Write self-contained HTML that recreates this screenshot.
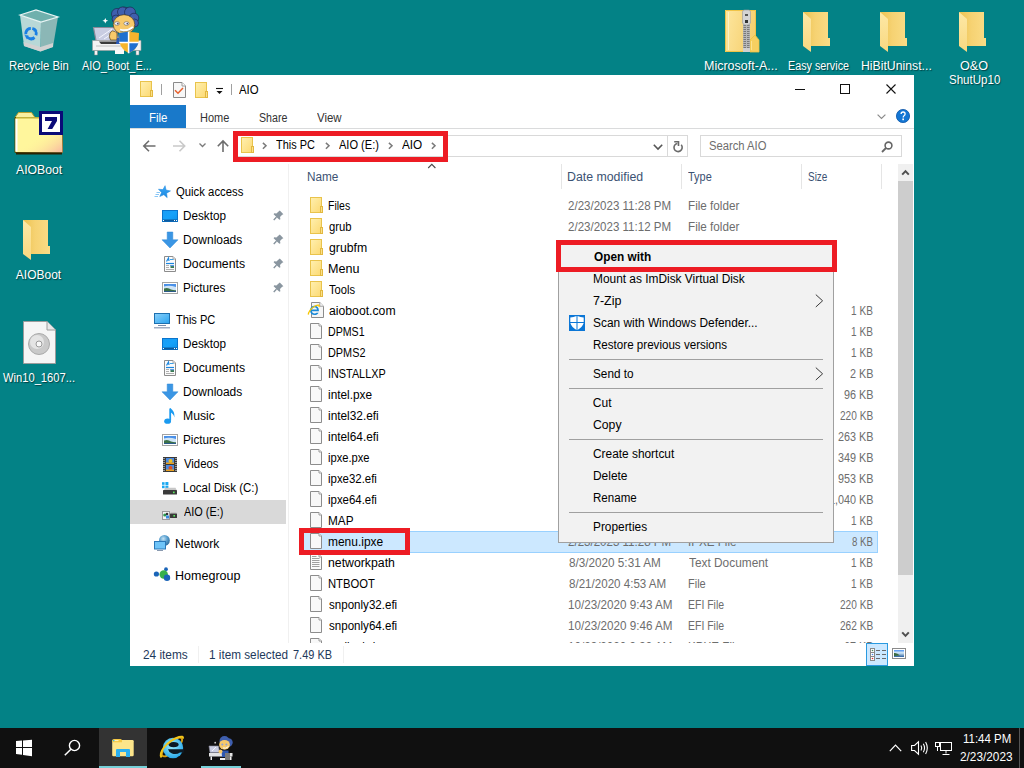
<!DOCTYPE html>
<html><head><meta charset="utf-8">
<style>
*{margin:0;padding:0;box-sizing:border-box}
html,body{width:1024px;height:768px;overflow:hidden}
body{background:#038286;font-family:"Liberation Sans",sans-serif;font-size:12px;position:relative;color:#000}
.a{position:absolute}
.t{position:absolute;white-space:nowrap;line-height:16px;letter-spacing:-0.3px}
.dl{position:absolute;color:#fff;text-align:center;white-space:nowrap;line-height:16px;letter-spacing:-0.3px;text-shadow:0 0 2px #000,1px 1px 1px #000}
svg{position:absolute;overflow:visible}
</style></head><body>
<svg width="0" height="0" style="position:absolute">
<defs>
<linearGradient id="fg" x1="0" y1="0" x2="1" y2="1"><stop offset="0" stop-color="#fff0b0"/><stop offset="1" stop-color="#fcd972"/></linearGradient>
<symbol id="fold16" viewBox="0 0 16 16">
<rect x="0.5" y="0.5" width="11" height="15" fill="url(#fg)" stroke="#e9c34b"/>
<rect x="10.5" y="9.5" width="2" height="6" fill="#fbe08a" stroke="#e2b840"/>
</symbol>
<symbol id="ie16" viewBox="0 0 16 16" overflow="visible">
<path d="M1.5 0.5H9.8L13.5 4.2V15.5H1.5Z" fill="#f6f6f6" stroke="#8c8c8c"/>
<path d="M9.8 0.5V4.2H13.5" fill="#fff" stroke="#9a9a9a"/>
<path d="M8.9 9.3V8.6C8.9 5.8 7 3.8 4.5 3.8C1.9 3.8 0 5.9 0 8.4C0 11 1.9 13 4.6 13C6.4 13 7.8 12.1 8.6 10.7H6.6C6.1 11.2 5.4 11.5 4.6 11.5C3.2 11.5 2.1 10.6 1.9 9.3ZM1.9 7.6C2.1 6.3 3.1 5.3 4.5 5.3S6.9 6.3 7.1 7.6Z" fill="#1a8ad8"/>
<path d="M-1.6 12.7C-2 10.5 1 6 5 4C8 2.6 9.8 2.6 9 5" stroke="#f7c600" stroke-width="1.3" fill="none"/>
</symbol>
<symbol id="file16" viewBox="0 0 16 16">
<path d="M0.5 0.5H9L11.5 3V15.5H0.5Z" fill="#f8f8f8" stroke="#8c8c8c"/>
<path d="M9 0.5V3H11.5" fill="#fff" stroke="#9a9a9a"/>
</symbol>
<symbol id="txt16" viewBox="0 0 16 16">
<path d="M0.5 0.5H9L11.5 3V15.5H0.5Z" fill="#fbfbfb" stroke="#8c8c8c"/>
<path d="M9 0.5V3H11.5" fill="#fff" stroke="#9a9a9a"/>
<path d="M2 2.5H6.5M2 4.5H9.5M2 6.5H9.5M2 8.5H9.5M2 10.5H9.5M2 12.5H9.5" stroke="#a0a0a0"/>
</symbol>
<linearGradient id="bfg" x1="0" y1="0" x2="1" y2="0"><stop offset="0" stop-color="#ecc250"/><stop offset="0.45" stop-color="#f6d272"/><stop offset="1" stop-color="#fadc86"/></linearGradient>
<linearGradient id="bff" x1="0" y1="0" x2="0" y2="1"><stop offset="0" stop-color="#fde8a6"/><stop offset="1" stop-color="#f8d880"/></linearGradient>
<symbol id="bigfold" viewBox="0 0 48 48">
<path d="M12 8H37V34H39V42H20Z" fill="url(#bfg)"/>
<path d="M12 8L20 15V48L12 42Z" fill="url(#bff)"/>
</symbol>
<symbol id="pin" viewBox="0 0 12 12">
<path d="M7 1L11 5L9.5 5.5L7 8L7.5 10L6.5 10.5L4 8L1 11L1 10.5L3.5 7.5L1.5 5L2 4.5L4 5L6.5 2.5Z" fill="#8e8e8e"/>
</symbol>
</defs>
</svg>

<!-- ============ DESKTOP ICONS ============ -->
<!-- Recycle bin -->
<svg style="left:14px;top:4px" width="48" height="52" viewBox="0 0 48 52">
<path d="M6 11L22 6L44 13L27 18Z" fill="#6fb0ad"/>
<path d="M6 11L27 18L26.5 47.5L10 42Z" fill="#b8d8d7"/>
<path d="M27 18L44 13L39 43L26.5 47.5Z" fill="#8bb7b6"/>
<path d="M9.5 38L26.5 43L39 39L39 43L26.5 47.5L10 42Z" fill="#d2d2d2"/>
<path d="M6 11L22 6L44 13L27 18Z" fill="none" stroke="#e8f4f4" stroke-width="1.2"/>
<circle cx="17" cy="29.5" r="5.2" fill="none" stroke="#1a80e4" stroke-width="2.8" stroke-dasharray="8.5 2.4" transform="rotate(-75 17 29.5)"/><path d="M20.5 23.5L23.5 26.5L19.5 27.5Z M10.5 31L13 35.5L14.5 31.5Z M20.5 36L16.5 36.5L19 33Z" fill="#1a80e4"/>
</svg>

<!-- AIO_Boot cartoon -->
<svg style="left:86px;top:2px" width="60" height="56" viewBox="0 0 60 56">
<path d="M7.5 25.5H30L33 38.5H10Z" fill="#c9cde2" stroke="#8a8a98" stroke-width="1.2"/>
<path d="M13 36L26 27M18 37L30 29" stroke="#f4f6ff" stroke-width="1"/>
<path d="M6.5 38.5H55V48.5H6.5Z" fill="#f3f3f3" stroke="#9a9a9a" stroke-width="0.6"/>
<path d="M13 39.5H42L44 42H15Z" fill="#3a3a3a"/>
<path d="M10 44H48" stroke="#c0c0c0" stroke-width="1"/>
<path d="M8.5 48.5H11.5V53H8.5ZM50 48.5H53V53H50Z" fill="#f4f4f4" stroke="#888" stroke-width="0.5"/>
<path d="M29 48H38V52H29Z" fill="#fafafa"/>
<g fill="#3f5fae" stroke="#1e2a50" stroke-width="0.7">
<circle cx="38" cy="14" r="9"/><circle cx="31" cy="12" r="5.5"/><circle cx="36.5" cy="10" r="5"/><circle cx="44" cy="10.5" r="5.5"/><circle cx="48" cy="16" r="4.8"/><circle cx="48.5" cy="21" r="4"/><circle cx="30" cy="17" r="4"/>
</g>
<ellipse cx="38" cy="22.5" rx="10.8" ry="9.8" fill="#f7c96a" stroke="#3a2a10" stroke-width="0.6"/>
<ellipse cx="31" cy="21.5" rx="2.6" ry="1.8" fill="#eef0ff" stroke="#555" stroke-width="0.5"/>
<ellipse cx="40.5" cy="21.5" rx="2.6" ry="1.8" fill="#eef0ff" stroke="#555" stroke-width="0.5"/>
<circle cx="31.8" cy="21.6" r="0.9" fill="#556"/><circle cx="41.3" cy="21.6" r="0.9" fill="#556"/>
<path d="M34 27.8Q41 30 47 25" stroke="#fff" stroke-width="2.2" fill="none"/>
<path d="M34 29Q41 31.5 47 26.5" stroke="#444" stroke-width="0.5" fill="none"/>
<path d="M24 31Q26 27.5 29 29.5L31 31V38H24.5Q22.5 35 24 31Z" fill="#f7c96a" stroke="#3a2a10" stroke-width="0.6"/>
<path d="M31 36H34V42H30Z" fill="#2a5ab8"/>
<path d="M33 31Q43 29.2 53 31L52.6 40Q50.5 48 43 51.2Q35.5 48 33.4 40Z" fill="#f6b42c"/>
<path d="M33 31Q38 30 42.6 29.8V40.5H33.4ZM42.6 40.5H52.6Q50.5 48 42.6 51.2Z" fill="#1f6fd0"/>
<path d="M42.6 29.8V51.2M33.2 40.5H52.8" stroke="#fff" stroke-width="1.5"/>
<path d="M19.3 16l0.9 2 2 0.8-2 0.8-0.9 2-0.9-2-2-0.8 2-0.8z" fill="#fff"/>
</svg>

<!-- AIOBoot 7 folder -->
<svg style="left:14px;top:108px" width="50" height="48" viewBox="0 0 50 48">
<defs><linearGradient id="dith" x1="0.2" y1="0.3" x2="0.9" y2="1"><stop offset="0.35" stop-color="#fff59a" stop-opacity="0"/><stop offset="1" stop-color="#f9c0a0"/></linearGradient></defs>
<path d="M4.5 4.5H17.5L21 9.5H1Z" fill="#f8f0a0" stroke="#b8a030" stroke-width="1"/>
<path d="M1 9.5H48.5V44.5H1Z" fill="#fff69c" stroke="#5a4a00" stroke-width="1"/>
<path d="M1 9.5H48.5V44.5H1Z" fill="url(#dith)"/>
<path d="M2.5 11V43.5" stroke="#fff" stroke-width="2"/>
<path d="M2 9.8H26" stroke="#c8b840" stroke-width="1.5"/>
<path d="M2 45.5H48" stroke="#2b2200" stroke-width="2"/>
<rect x="26.5" y="4.5" width="21" height="21" fill="#fff" stroke="#0a0a78" stroke-width="3"/>
<path d="M31 9H43V13L38.2 21H33.6L38 13H31Z" fill="#0a0a78"/>
</svg>

<!-- AIOBoot folder -->
<svg style="left:11px;top:212px" width="48" height="48" viewBox="0 0 48 48"><use href="#bigfold"/></svg>

<!-- Win10 ISO -->
<svg style="left:14px;top:318px" width="48" height="48" viewBox="0 0 48 48">
<path d="M9.5 3.5H33L41.5 12V45.5H9.5Z" fill="#f5f5f5" stroke="#9c9c9c"/>
<path d="M33 3.5V12H41.5" fill="#e8e8e8" stroke="#9c9c9c"/>
<circle cx="25" cy="26" r="10.5" fill="#c9c9c9" stroke="#aaa"/>
<circle cx="23" cy="24" r="7" fill="#e4e4e4"/>
<circle cx="25" cy="26" r="3" fill="#f8f8f8" stroke="#999"/>
</svg>

<!-- right desktop icons -->
<svg style="left:718px;top:4px" width="48" height="52" viewBox="0 0 48 52">
<defs><linearGradient id="zg" x1="0" y1="0" x2="1" y2="0.3"><stop offset="0" stop-color="#fde7a0"/><stop offset="1" stop-color="#f6d070"/></linearGradient></defs>
<path d="M7 6H38V48H7Z" fill="url(#zg)"/>
<path d="M7.5 6.5H37.5V47.5H7.5Z" fill="none" stroke="#f0c448" stroke-width="1"/>
<path d="M10.5 8V46" stroke="#fff6d0" stroke-width="0.8"/>
<path d="M32 48V36L37 31L41 36V48Z" fill="#f7d060" stroke="#efc040" stroke-width="0.8"/>
<path d="M33.5 46V37" stroke="#fff0b0" stroke-width="0.6"/>
<rect x="25" y="18" width="7" height="30" fill="#b8b8b8"/>
<path d="M25.5 19.5H31.5M25.5 21.5H31.5M25.5 23.5H31.5M25.5 25.5H31.5M25.5 27.5H31.5M25.5 29.5H31.5M25.5 31.5H31.5M25.5 33.5H31.5M25.5 35.5H31.5M25.5 37.5H31.5M25.5 39.5H31.5M25.5 41.5H31.5M25.5 43.5H31.5" stroke="#6a6a6a" stroke-width="0.8" stroke-dasharray="2.5 1"/>
<rect x="25" y="44" width="7" height="4" fill="#d0d0d0"/>
<path d="M24.5 8Q24.5 6 26.5 6H30.5Q32.5 6 32.5 8V19L30.5 21H26.5L24.5 19Z" fill="#d4d4d4" stroke="#9a9a9a" stroke-width="0.6"/>
<rect x="27" y="10" width="3" height="2" fill="#555"/><rect x="27" y="16" width="3" height="3" fill="#333"/>
</svg>
<svg style="left:791px;top:4px" width="48" height="48" viewBox="0 0 48 48"><use href="#bigfold"/></svg>
<svg style="left:868px;top:4px" width="48" height="48" viewBox="0 0 48 48"><use href="#bigfold"/></svg>
<svg style="left:947px;top:4px" width="48" height="48" viewBox="0 0 48 48"><use href="#bigfold"/></svg>


<!-- WINDOW -->
<div class="t" style="left:8.75px;top:58px;color:#fff;text-shadow:1px 1px 1px rgba(0,0,0,.5);letter-spacing:0;transform:scaleX(0.9452);transform-origin:0 0">Recycle Bin</div>
<div class="t" style="left:82.00px;top:58px;color:#fff;text-shadow:1px 1px 1px rgba(0,0,0,.5);letter-spacing:0;transform:scaleX(0.9105);transform-origin:0 0">AIO_Boot_E...</div>
<div class="t" style="left:15.50px;top:162px;color:#fff;text-shadow:1px 1px 1px rgba(0,0,0,.5);letter-spacing:0;transform:scaleX(1.0167);transform-origin:0 0">AIOBoot</div>
<div class="t" style="left:15.80px;top:266.5px;color:#fff;text-shadow:1px 1px 1px rgba(0,0,0,.5);letter-spacing:0;transform:scaleX(1.0000);transform-origin:0 0">AIOBoot</div>
<div class="t" style="left:2.90px;top:370.4px;color:#fff;text-shadow:1px 1px 1px rgba(0,0,0,.5);letter-spacing:0;transform:scaleX(0.9303);transform-origin:0 0">Win10_1607...</div>
<div class="t" style="left:703.66px;top:58px;color:#fff;text-shadow:1px 1px 1px rgba(0,0,0,.5);letter-spacing:0;transform:scaleX(1.0420);transform-origin:0 0">Microsoft-A...</div>
<div class="t" style="left:787.70px;top:58px;color:#fff;text-shadow:1px 1px 1px rgba(0,0,0,.5);letter-spacing:0;transform:scaleX(0.8970);transform-origin:0 0">Easy service</div>
<div class="t" style="left:860.98px;top:58px;color:#fff;text-shadow:1px 1px 1px rgba(0,0,0,.5);letter-spacing:0;transform:scaleX(1.0209);transform-origin:0 0">HiBitUninst...</div>
<div class="t" style="left:960.00px;top:58px;color:#fff;text-shadow:1px 1px 1px rgba(0,0,0,.5);letter-spacing:0;transform:scaleX(1.0500);transform-origin:0 0">O&amp;O</div>
<div class="t" style="left:949.04px;top:72.3px;color:#fff;text-shadow:1px 1px 1px rgba(0,0,0,.5);letter-spacing:0;transform:scaleX(0.9615);transform-origin:0 0">ShutUp10</div>
<div class="a" style="left:130px;top:75px;width:784px;height:591px;background:#fff;"></div>
<svg style="left:140px;top:81px" width="16" height="16" viewBox="0 0 16 16"><use href="#fold16"/></svg>
<div class="a" style="left:161px;top:84px;width:1px;height:11px;background:#a0a0a0;"></div>
<svg style="left:173px;top:82px" width="13" height="16" viewBox="0 0 13 16"><path d="M0.5 0.5H9L12.5 4V15.5H0.5Z" fill="#f7f7f7" stroke="#8a8a8a"/><path d="M9 0.5V4H12.5" fill="#fff" stroke="#9a9a9a"/><path d="M2 8.3L5 11.2L10 6" stroke="#e8602c" stroke-width="1.5" fill="none"/></svg>
<svg style="left:195px;top:82px" width="16" height="16" viewBox="0 0 16 16"><use href="#fold16"/></svg>
<svg style="left:216px;top:87px" width="8" height="8" viewBox="0 0 8 8"><path d="M0 1.5H7" stroke="#111" stroke-width="1.1"/><path d="M0.5 4H6.5L3.5 7Z" fill="#111"/></svg>
<div class="a" style="left:231px;top:84px;width:1px;height:11px;background:#a0a0a0;"></div>
<div class="t" style="left:239.00px;top:82px;letter-spacing:0;transform:scaleX(0.9500);transform-origin:0 0">AIO</div>
<div class="a" style="left:795px;top:89px;width:10px;height:1px;background:#111;"></div>
<div class="a" style="left:840px;top:84px;width:10px;height:10px;background:transparent;border:1px solid #111"></div>
<svg style="left:886px;top:84px" width="10" height="10" viewBox="0 0 10 10"><path d="M0.5 0.5L9.5 9.5M9.5 0.5L0.5 9.5" stroke="#111" stroke-width="1.1"/></svg>
<div class="a" style="left:130px;top:105px;width:56px;height:23px;background:#1979ca;"></div>
<div class="t" style="left:148.54px;top:110px;color:#fff;letter-spacing:0;transform:scaleX(0.9556);transform-origin:0 0">File</div>
<div class="t" style="left:199.68px;top:110px;color:#333;letter-spacing:0;transform:scaleX(0.9161);transform-origin:0 0">Home</div>
<div class="t" style="left:258.81px;top:110px;color:#333;letter-spacing:0;transform:scaleX(0.8871);transform-origin:0 0">Share</div>
<div class="t" style="left:317.10px;top:110px;color:#333;letter-spacing:0;transform:scaleX(0.9538);transform-origin:0 0">View</div>
<div class="a" style="left:130px;top:128px;width:784px;height:1px;background:#dadbdc;"></div>
<svg style="left:877px;top:114px" width="9" height="6" viewBox="0 0 9 6"><path d="M0.6 0.6L4.5 4.4L8.4 0.6" stroke="#8a8a8a" stroke-width="1.2" fill="none"/></svg>
<svg style="left:896px;top:109px" width="14" height="14" viewBox="0 0 14 14"><circle cx="7" cy="7" r="6.6" fill="#1376d4" stroke="#0b55a8" stroke-width="0.8"/><path d="M5.1 5Q5.1 3 7.1 3Q9.1 3 9.1 4.9Q9.1 6 8 6.7Q7.2 7.2 7.2 8.5" stroke="#fff" stroke-width="1.3" fill="none"/><rect x="6.3" y="9.5" width="1.7" height="1.7" fill="#fff"/></svg>
<svg style="left:143px;top:140px" width="13" height="12" viewBox="0 0 13 12"><path d="M1 6H12.5M6 0.8L0.8 6L6 11.2" stroke="#6d6d6d" stroke-width="1.6" fill="none"/></svg>
<svg style="left:173px;top:140px" width="13" height="12" viewBox="0 0 13 12"><path d="M0 6H11.5M6.5 0.8L11.7 6L6.5 11.2" stroke="#c9c9c9" stroke-width="1.6" fill="none"/></svg>
<svg style="left:199px;top:143px" width="7" height="5" viewBox="0 0 7 5"><path d="M0.5 0.5L3.5 3.5L6.5 0.5" stroke="#7a7a7a" stroke-width="1.3" fill="none"/></svg>
<svg style="left:217px;top:140px" width="12" height="12" viewBox="0 0 12 12"><path d="M6 1.2V12M0.8 6.2L6 1L11.2 6.2" stroke="#6d6d6d" stroke-width="1.6" fill="none"/></svg>
<div class="a" style="left:237px;top:135px;width:451px;height:22px;background:#fff;border:1px solid #d9d9d9"></div>
<div class="a" style="left:667px;top:136px;width:1px;height:20px;background:#d9d9d9;"></div>
<svg style="left:241px;top:137px" width="16" height="16" viewBox="0 0 16 16"><use href="#fold16"/></svg>
<svg style="left:261px;top:142px" width="7" height="8" viewBox="0 0 7 8"><path d="M1.9 0.9L5 3.8L1.9 6.7" stroke="#7a7a7a" stroke-width="1.5" fill="none"/></svg>
<svg style="left:324px;top:142px" width="7" height="8" viewBox="0 0 7 8"><path d="M1.9 0.9L5 3.8L1.9 6.7" stroke="#7a7a7a" stroke-width="1.5" fill="none"/></svg>
<svg style="left:387px;top:142px" width="7" height="8" viewBox="0 0 7 8"><path d="M1.9 0.9L5 3.8L1.9 6.7" stroke="#7a7a7a" stroke-width="1.5" fill="none"/></svg>
<svg style="left:430px;top:142px" width="7" height="8" viewBox="0 0 7 8"><path d="M1.9 0.9L5 3.8L1.9 6.7" stroke="#7a7a7a" stroke-width="1.5" fill="none"/></svg>
<div class="t" style="left:276.00px;top:137px;letter-spacing:0;transform:scaleX(0.9095);transform-origin:0 0">This PC</div>
<div class="t" style="left:338.75px;top:137px;letter-spacing:0;transform:scaleX(0.9209);transform-origin:0 0">AIO (E:)</div>
<div class="t" style="left:401.80px;top:137px;letter-spacing:0;transform:scaleX(0.9800);transform-origin:0 0">AIO</div>
<svg style="left:653px;top:144px" width="10" height="6" viewBox="0 0 10 6"><path d="M0.8 0.8L5 5L9.2 0.8" stroke="#555" stroke-width="1.6" fill="none"/></svg>
<svg style="left:672px;top:140px" width="13" height="13" viewBox="0 0 13 13"><path d="M9.24 4.86A4.1 4.1 0 1 1 5.39 3.46" stroke="#6a6a6a" stroke-width="1.6" fill="none"/><path d="M2.2 1.7H6.5V6" stroke="#6a6a6a" stroke-width="1.6" fill="none"/></svg>
<div class="a" style="left:700px;top:135px;width:202px;height:22px;background:#fff;border:1px solid #d9d9d9"></div>
<div class="t" style="left:708.96px;top:138px;color:#6d6d6d;letter-spacing:0;transform:scaleX(0.9367);transform-origin:0 0">Search AIO</div>
<svg style="left:881px;top:141px" width="12" height="12" viewBox="0 0 12 12"><circle cx="7.5" cy="4.5" r="3.4" stroke="#666" stroke-width="1.6" fill="none"/><path d="M5 7L1 11" stroke="#666" stroke-width="1.8"/></svg>
<div class="a" style="left:233px;top:131px;width:215px;height:31px;background:transparent;border:5px solid #ed1c24"></div>
<div class="a" style="left:288px;top:164px;width:1px;height:479px;background:#f0f0f0;"></div>
<div class="a" style="left:130px;top:500px;width:156px;height:24px;background:#d9d9d9;"></div>
<svg style="left:150px;top:182px" width="24" height="20" viewBox="0 0 24 20"><defs><linearGradient id="sg" x1="0" y1="0" x2="0" y2="1"><stop offset="0" stop-color="#3aa8f8"/><stop offset="1" stop-color="#1c88e0"/></linearGradient></defs><path d="M15.09 3.66L16.08 8.06L20.50 8.89L16.63 11.18L17.20 15.65L13.82 12.67L9.75 14.60L11.54 10.47L8.45 7.19L12.93 7.62Z" fill="url(#sg)" stroke="#1e86dc" stroke-width="0.5"/><path d="M5.5 12.5H9M6.5 10.5H10M4.5 14.5H8" stroke="#7cc0f4" stroke-width="0.9"/></svg>
<div class="t" style="left:176.20px;top:184px;letter-spacing:0;transform:scaleX(0.9437);transform-origin:0 0">Quick access</div>
<svg style="left:162px;top:210px" width="16" height="12" viewBox="0 0 16 12"><defs><linearGradient id="dg" x1="0" y1="0" x2="1" y2="1"><stop offset="0" stop-color="#1a9cf4"/><stop offset="0.5" stop-color="#16a2fa"/><stop offset="1" stop-color="#0d92ea"/></linearGradient></defs><rect x="0.5" y="0.5" width="15" height="11" fill="url(#dg)" stroke="#0a74cc"/><rect x="1" y="9.5" width="14" height="2" fill="#0c5a9e"/><rect x="1" y="10" width="1" height="1" fill="#fff"/><rect x="12" y="10" width="1" height="1" fill="#fff"/><rect x="14" y="10" width="1" height="1" fill="#fff"/></svg>
<div class="t" style="left:183.42px;top:208px;letter-spacing:0;transform:scaleX(0.9767);transform-origin:0 0">Desktop</div>
<svg style="left:273px;top:210px" width="11" height="11" viewBox="0 0 11 11"><path d="M6.8 0.6L10.4 4.2L9.2 4.8L7 7L7.4 9.2L6.4 9.8L3.6 7.2L1 10.2L0.6 9.8L3.2 6.8L0.6 4.2L1.2 3.2L3.4 3.6L5.6 1.4Z" fill="#8a96a0"/><path d="M3.4 7.2L0.8 10" stroke="#8a96a0" stroke-width="1.3"/></svg>
<svg style="left:162px;top:232px" width="16" height="16" viewBox="0 0 16 16"><path d="M5.2 0H10.8V7.8H16L8 16L0 7.8H5.2Z" fill="#3b96e4" stroke="#2a86d6" stroke-width="0.5"/></svg>
<div class="t" style="left:183.40px;top:232px;letter-spacing:0;transform:scaleX(0.9983);transform-origin:0 0">Downloads</div>
<svg style="left:273px;top:234px" width="11" height="11" viewBox="0 0 11 11"><path d="M6.8 0.6L10.4 4.2L9.2 4.8L7 7L7.4 9.2L6.4 9.8L3.6 7.2L1 10.2L0.6 9.8L3.2 6.8L0.6 4.2L1.2 3.2L3.4 3.6L5.6 1.4Z" fill="#8a96a0"/><path d="M3.4 7.2L0.8 10" stroke="#8a96a0" stroke-width="1.3"/></svg>
<svg style="left:164px;top:256px" width="12" height="16" viewBox="0 0 12 16"><path d="M0.5 0.5H9L11.5 3V15.5H0.5Z" fill="#fbfbfb" stroke="#8c8c8c"/><path d="M9 0.5V3H11.5" fill="#eee" stroke="#aaa"/><path d="M2.5 5.5L4.5 2L5 5" stroke="#1a86e0" stroke-width="1.2" fill="none"/><path d="M6 3.5H9.5" stroke="#3aa0e8" stroke-width="1"/><path d="M2 7.5H10" stroke="#1a86e0" stroke-width="1.2"/><path d="M2 9.5H5M2 11.5H5M2 13.5H10" stroke="#b0b0b0" stroke-width="1"/><rect x="6.5" y="9" width="3.5" height="3" fill="#3a7a50"/><rect x="6.5" y="9" width="3.5" height="1.2" fill="#5a9ae8"/></svg>
<div class="t" style="left:183.38px;top:256px;letter-spacing:0;transform:scaleX(1.0220);transform-origin:0 0">Documents</div>
<svg style="left:273px;top:258px" width="11" height="11" viewBox="0 0 11 11"><path d="M6.8 0.6L10.4 4.2L9.2 4.8L7 7L7.4 9.2L6.4 9.8L3.6 7.2L1 10.2L0.6 9.8L3.2 6.8L0.6 4.2L1.2 3.2L3.4 3.6L5.6 1.4Z" fill="#8a96a0"/><path d="M3.4 7.2L0.8 10" stroke="#8a96a0" stroke-width="1.3"/></svg>
<svg style="left:162px;top:282px" width="16" height="12" viewBox="0 0 16 12"><rect x="0.5" y="0.5" width="15" height="11" fill="#fff" stroke="#a3a3a3"/><rect x="2" y="2" width="12" height="8" fill="#4a90e8"/><path d="M2 4.5Q7 3 14 5V10H2Z" fill="#cfe4f6"/><path d="M2 6.5Q6 5 9 7.5Q12 8.5 14 8.2V10H2Z" fill="#3c7048"/><path d="M2 9H14V10H2Z" fill="#2a5a8a"/></svg>
<div class="t" style="left:183.42px;top:280px;letter-spacing:0;transform:scaleX(0.9762);transform-origin:0 0">Pictures</div>
<svg style="left:273px;top:282px" width="11" height="11" viewBox="0 0 11 11"><path d="M6.8 0.6L10.4 4.2L9.2 4.8L7 7L7.4 9.2L6.4 9.8L3.6 7.2L1 10.2L0.6 9.8L3.2 6.8L0.6 4.2L1.2 3.2L3.4 3.6L5.6 1.4Z" fill="#8a96a0"/><path d="M3.4 7.2L0.8 10" stroke="#8a96a0" stroke-width="1.3"/></svg>
<svg style="left:154px;top:313px" width="16" height="16" viewBox="0 0 16 16"><defs><linearGradient id="pg" x1="0" y1="0" x2="1" y2="1"><stop offset="0" stop-color="#8ad0fa"/><stop offset="1" stop-color="#2aa4f0"/></linearGradient></defs><rect x="0.5" y="0.5" width="15" height="10" fill="url(#pg)" stroke="#1c70b0"/><path d="M4 12.5H12" stroke="#7a8ca8" stroke-width="1"/><path d="M0 14.8H16" stroke="#8a9ab4" stroke-width="1.2"/></svg>
<div class="t" style="left:176.20px;top:312px;letter-spacing:0;transform:scaleX(0.9214);transform-origin:0 0">This PC</div>
<svg style="left:162px;top:338px" width="16" height="12" viewBox="0 0 16 12"><defs><linearGradient id="dg" x1="0" y1="0" x2="1" y2="1"><stop offset="0" stop-color="#1a9cf4"/><stop offset="0.5" stop-color="#16a2fa"/><stop offset="1" stop-color="#0d92ea"/></linearGradient></defs><rect x="0.5" y="0.5" width="15" height="11" fill="url(#dg)" stroke="#0a74cc"/><rect x="1" y="9.5" width="14" height="2" fill="#0c5a9e"/><rect x="1" y="10" width="1" height="1" fill="#fff"/><rect x="12" y="10" width="1" height="1" fill="#fff"/><rect x="14" y="10" width="1" height="1" fill="#fff"/></svg>
<div class="t" style="left:183.42px;top:336px;letter-spacing:0;transform:scaleX(0.9767);transform-origin:0 0">Desktop</div>
<svg style="left:164px;top:360px" width="12" height="16" viewBox="0 0 12 16"><path d="M0.5 0.5H9L11.5 3V15.5H0.5Z" fill="#fbfbfb" stroke="#8c8c8c"/><path d="M9 0.5V3H11.5" fill="#eee" stroke="#aaa"/><path d="M2.5 5.5L4.5 2L5 5" stroke="#1a86e0" stroke-width="1.2" fill="none"/><path d="M6 3.5H9.5" stroke="#3aa0e8" stroke-width="1"/><path d="M2 7.5H10" stroke="#1a86e0" stroke-width="1.2"/><path d="M2 9.5H5M2 11.5H5M2 13.5H10" stroke="#b0b0b0" stroke-width="1"/><rect x="6.5" y="9" width="3.5" height="3" fill="#3a7a50"/><rect x="6.5" y="9" width="3.5" height="1.2" fill="#5a9ae8"/></svg>
<div class="t" style="left:183.38px;top:360px;letter-spacing:0;transform:scaleX(1.0220);transform-origin:0 0">Documents</div>
<svg style="left:162px;top:384px" width="16" height="16" viewBox="0 0 16 16"><path d="M5.2 0H10.8V7.8H16L8 16L0 7.8H5.2Z" fill="#3b96e4" stroke="#2a86d6" stroke-width="0.5"/></svg>
<div class="t" style="left:183.40px;top:384px;letter-spacing:0;transform:scaleX(0.9983);transform-origin:0 0">Downloads</div>
<svg style="left:164px;top:408px" width="12" height="16" viewBox="0 0 12 16"><path d="M6.2 0.5V12.5" stroke="#1a9af0" stroke-width="1.8"/><ellipse cx="3.6" cy="13.2" rx="3.4" ry="2.6" fill="#1a9af0"/><path d="M6 0Q11 3 10.5 9.5Q9.5 5.5 6 4Z" fill="#1a9af0"/></svg>
<div class="t" style="left:183.38px;top:408px;letter-spacing:0;transform:scaleX(1.0167);transform-origin:0 0">Music</div>
<svg style="left:162px;top:434px" width="16" height="12" viewBox="0 0 16 12"><rect x="0.5" y="0.5" width="15" height="11" fill="#fff" stroke="#a3a3a3"/><rect x="2" y="2" width="12" height="8" fill="#4a90e8"/><path d="M2 4.5Q7 3 14 5V10H2Z" fill="#cfe4f6"/><path d="M2 6.5Q6 5 9 7.5Q12 8.5 14 8.2V10H2Z" fill="#3c7048"/><path d="M2 9H14V10H2Z" fill="#2a5a8a"/></svg>
<div class="t" style="left:183.42px;top:432px;letter-spacing:0;transform:scaleX(0.9762);transform-origin:0 0">Pictures</div>
<svg style="left:163px;top:457px" width="14" height="15" viewBox="0 0 14 15"><rect x="0" y="0" width="14" height="15" fill="#3a3a3a"/><path d="M1 1V14M13 1V14" stroke="#f0f0f0" stroke-width="1" stroke-dasharray="1 1"/><rect x="3" y="1" width="8" height="6" fill="#4a8ae0"/><rect x="3" y="8" width="8" height="6" fill="#4a8ae0"/><circle cx="7.5" cy="4" r="2" fill="#f0c020"/><circle cx="7.5" cy="11" r="2" fill="#e05020"/><rect x="3" y="5.5" width="8" height="1.5" fill="#e8a020"/><rect x="3" y="12.5" width="8" height="1.5" fill="#e8a020"/></svg>
<div class="t" style="left:184.40px;top:456px;letter-spacing:0;transform:scaleX(0.9444);transform-origin:0 0">Videos</div>
<svg style="left:161px;top:482px" width="17" height="14" viewBox="0 0 17 14"><rect x="1" y="0.2" width="2.6" height="2.6" fill="#1aa8f0"/><rect x="4.4" y="0" width="3" height="3" fill="#1aa8f0"/><rect x="1" y="3.6" width="2.6" height="2.6" fill="#1aa8f0"/><rect x="4.4" y="3.6" width="3" height="3" fill="#1aa8f0"/><path d="M3 8.2L4 5.8H14.5L15.8 8.2Z" fill="#c8c8c8"/><rect x="2" y="8" width="14" height="4.6" rx="0.6" fill="#3a3a3a"/><rect x="12" y="9.6" width="1.6" height="1.6" fill="#5cf060"/></svg>
<div class="t" style="left:183.44px;top:480px;letter-spacing:0;transform:scaleX(0.9571);transform-origin:0 0">Local Disk (C:)</div>
<svg style="left:161px;top:511px" width="17" height="10" viewBox="0 0 17 10"><rect x="1.5" y="0.5" width="7" height="8" fill="#f4f4f4" stroke="#9a9a9a"/><circle cx="3.8" cy="4" r="1.6" fill="#2a9a50"/><circle cx="6" cy="3" r="1.3" fill="#333"/><rect x="5" y="4.5" width="3" height="3" fill="#3a8ae0"/><path d="M9 2.5L10 1H15L16 2.5Z" fill="#c8c8c8"/><rect x="9" y="2.5" width="7" height="4.5" rx="0.5" fill="#3a3a3a"/><rect x="12.4" y="4" width="1.6" height="1.6" fill="#5cf060"/></svg>
<div class="t" style="left:184.40px;top:504px;letter-spacing:0;transform:scaleX(0.9070);transform-origin:0 0">AIO (E:)</div>
<svg style="left:154px;top:535px" width="17" height="17" viewBox="0 0 17 17"><defs><radialGradient id="ng" cx="0.4" cy="0.35" r="0.7"><stop offset="0" stop-color="#c8e4f4"/><stop offset="0.5" stop-color="#5aa0d0"/><stop offset="1" stop-color="#2a6a9a"/></radialGradient></defs><circle cx="10.4" cy="5.4" r="5.4" fill="url(#ng)"/><rect x="0.5" y="6.5" width="11" height="7.5" fill="#6ec4f8" stroke="#2a78b8"/><path d="M3 15.5H9" stroke="#8a9ab0"/></svg>
<div class="t" style="left:175.19px;top:536px;letter-spacing:0;transform:scaleX(1.0070);transform-origin:0 0">Network</div>
<svg style="left:153px;top:567px" width="18" height="16" viewBox="0 0 18 16"><circle cx="3.4" cy="7" r="2.6" fill="#1a64b8"/><circle cx="13" cy="2.2" r="1.9" fill="#1a64b8"/><circle cx="10.7" cy="7.5" r="4.2" fill="#36b04c"/><circle cx="14" cy="10.8" r="3.2" fill="#1a64b8"/></svg>
<div class="t" style="left:175.16px;top:568px;letter-spacing:0;transform:scaleX(1.0443);transform-origin:0 0">Homegroup</div>
<div class="t" style="left:306.62px;top:169px;color:#3b5273;letter-spacing:0;transform:scaleX(0.9806);transform-origin:0 0">Name</div>
<div class="t" style="left:567.37px;top:169px;color:#3b5273;letter-spacing:0;transform:scaleX(1.0278);transform-origin:0 0">Date modified</div>
<div class="t" style="left:688.40px;top:169px;color:#3b5273;letter-spacing:0;transform:scaleX(0.9115);transform-origin:0 0">Type</div>
<div class="t" style="left:807.67px;top:169px;color:#3b5273;letter-spacing:0;transform:scaleX(0.8295);transform-origin:0 0">Size</div>
<div class="a" style="left:561px;top:164px;width:1px;height:25px;background:#e5e5e5;"></div>
<div class="a" style="left:681px;top:164px;width:1px;height:25px;background:#e5e5e5;"></div>
<div class="a" style="left:801px;top:164px;width:1px;height:25px;background:#e5e5e5;"></div>
<div class="a" style="left:881px;top:164px;width:1px;height:25px;background:#e5e5e5;"></div>
<svg style="left:427px;top:163px" width="10" height="7" viewBox="0 0 10 7"><path d="M1.2 5L4.8 1.3L8.4 5" stroke="#4a4a4a" stroke-width="1.1" fill="none"/></svg>
<div class="a" style="left:289px;top:195px;width:609px;height:448px;overflow:hidden">
<div class="a" style="left:10px;top:336px;width:579px;height:22px;background:#cce8ff;border:1px solid #99d1ff"></div>
<svg style="left:21px;top:2px" width="16" height="16" viewBox="0 0 16 16"><use href="#fold16"/></svg>
<div class="t" style="left:39.12px;top:3px;letter-spacing:0;transform:scaleX(0.8750);transform-origin:0 0">Files</div>
<div class="t" style="left:279.04px;top:3px;color:#6d6d6d;letter-spacing:0;transform:scaleX(0.9619);transform-origin:0 0">2/23/2023 11:28 PM</div>
<div class="t" style="left:399.02px;top:3px;color:#6d6d6d;letter-spacing:0;transform:scaleX(0.9750);transform-origin:0 0">File folder</div>
<svg style="left:21px;top:23px" width="16" height="16" viewBox="0 0 16 16"><use href="#fold16"/></svg>
<div class="t" style="left:40.00px;top:24px;letter-spacing:0;transform:scaleX(0.9417);transform-origin:0 0">grub</div>
<div class="t" style="left:279.04px;top:24px;color:#6d6d6d;letter-spacing:0;transform:scaleX(0.9619);transform-origin:0 0">2/23/2023 11:12 PM</div>
<div class="t" style="left:399.02px;top:24px;color:#6d6d6d;letter-spacing:0;transform:scaleX(0.9750);transform-origin:0 0">File folder</div>
<svg style="left:21px;top:44px" width="16" height="16" viewBox="0 0 16 16"><use href="#fold16"/></svg>
<div class="t" style="left:40.00px;top:45px;letter-spacing:0;transform:scaleX(1.0216);transform-origin:0 0">grubfm</div>
<div class="t" style="left:279.04px;top:45px;color:#6d6d6d;letter-spacing:0;transform:scaleX(0.9619);transform-origin:0 0">2/23/2023 11:12 PM</div>
<div class="t" style="left:399.02px;top:45px;color:#6d6d6d;letter-spacing:0;transform:scaleX(0.9750);transform-origin:0 0">File folder</div>
<svg style="left:21px;top:65px" width="16" height="16" viewBox="0 0 16 16"><use href="#fold16"/></svg>
<div class="t" style="left:38.95px;top:66px;letter-spacing:0;transform:scaleX(1.0464);transform-origin:0 0">Menu</div>
<div class="t" style="left:279.04px;top:66px;color:#6d6d6d;letter-spacing:0;transform:scaleX(0.9619);transform-origin:0 0">2/23/2023 11:12 PM</div>
<div class="t" style="left:399.02px;top:66px;color:#6d6d6d;letter-spacing:0;transform:scaleX(0.9750);transform-origin:0 0">File folder</div>
<svg style="left:21px;top:86px" width="16" height="16" viewBox="0 0 16 16"><use href="#fold16"/></svg>
<div class="t" style="left:40.00px;top:87px;letter-spacing:0;transform:scaleX(0.9286);transform-origin:0 0">Tools</div>
<div class="t" style="left:279.04px;top:87px;color:#6d6d6d;letter-spacing:0;transform:scaleX(0.9619);transform-origin:0 0">2/23/2023 11:12 PM</div>
<div class="t" style="left:399.02px;top:87px;color:#6d6d6d;letter-spacing:0;transform:scaleX(0.9750);transform-origin:0 0">File folder</div>
<svg style="left:21px;top:107px" width="16" height="16" viewBox="0 0 16 16"><use href="#ie16"/></svg>
<div class="t" style="left:40.00px;top:108px;letter-spacing:0;transform:scaleX(1.0185);transform-origin:0 0">aioboot.com</div>
<div class="t" style="left:279.03px;top:108px;color:#6d6d6d;letter-spacing:0;transform:scaleX(0.9700);transform-origin:0 0">6/10/2020 4:12 AM</div>
<div class="t" style="left:399.03px;top:108px;color:#6d6d6d;letter-spacing:0;transform:scaleX(0.9700);transform-origin:0 0">Internet Shortcut</div>
<div class="t" style="left:562.26px;top:108px;color:#6d6d6d;letter-spacing:0;transform:scaleX(0.8400);transform-origin:0 0">1 KB</div>
<svg style="left:21px;top:128px" width="16" height="16" viewBox="0 0 16 16"><use href="#file16"/></svg>
<div class="t" style="left:39.12px;top:129px;letter-spacing:0;transform:scaleX(0.8850);transform-origin:0 0">DPMS1</div>
<div class="t" style="left:280.00px;top:129px;color:#6d6d6d;letter-spacing:0;transform:scaleX(0.9650);transform-origin:0 0">8/21/2020 4:53 AM</div>
<div class="t" style="left:399.08px;top:129px;color:#6d6d6d;letter-spacing:0;transform:scaleX(0.9167);transform-origin:0 0">File</div>
<div class="t" style="left:562.26px;top:129px;color:#6d6d6d;letter-spacing:0;transform:scaleX(0.8400);transform-origin:0 0">1 KB</div>
<svg style="left:21px;top:149px" width="16" height="16" viewBox="0 0 16 16"><use href="#file16"/></svg>
<div class="t" style="left:39.10px;top:150px;letter-spacing:0;transform:scaleX(0.9050);transform-origin:0 0">DPMS2</div>
<div class="t" style="left:280.00px;top:150px;color:#6d6d6d;letter-spacing:0;transform:scaleX(0.9650);transform-origin:0 0">8/21/2020 4:53 AM</div>
<div class="t" style="left:399.08px;top:150px;color:#6d6d6d;letter-spacing:0;transform:scaleX(0.9167);transform-origin:0 0">File</div>
<div class="t" style="left:562.26px;top:150px;color:#6d6d6d;letter-spacing:0;transform:scaleX(0.8400);transform-origin:0 0">1 KB</div>
<svg style="left:21px;top:170px" width="16" height="16" viewBox="0 0 16 16"><use href="#file16"/></svg>
<div class="t" style="left:39.10px;top:171px;letter-spacing:0;transform:scaleX(0.9032);transform-origin:0 0">INSTALLXP</div>
<div class="t" style="left:280.00px;top:171px;color:#6d6d6d;letter-spacing:0;transform:scaleX(0.9650);transform-origin:0 0">8/21/2020 4:53 AM</div>
<div class="t" style="left:399.08px;top:171px;color:#6d6d6d;letter-spacing:0;transform:scaleX(0.9167);transform-origin:0 0">File</div>
<div class="t" style="left:560.70px;top:171px;color:#6d6d6d;letter-spacing:0;transform:scaleX(0.9000);transform-origin:0 0">2 KB</div>
<svg style="left:21px;top:191px" width="16" height="16" viewBox="0 0 16 16"><use href="#file16"/></svg>
<div class="t" style="left:39.01px;top:192px;letter-spacing:0;transform:scaleX(0.9860);transform-origin:0 0">intel.pxe</div>
<div class="t" style="left:279.03px;top:192px;color:#6d6d6d;letter-spacing:0;transform:scaleX(0.9726);transform-origin:0 0">10/23/2020 9:43 AM</div>
<div class="t" style="left:399.03px;top:192px;color:#6d6d6d;letter-spacing:0;transform:scaleX(0.9700);transform-origin:0 0">PXE File</div>
<div class="t" style="left:555.30px;top:192px;color:#6d6d6d;letter-spacing:0;transform:scaleX(0.9000);transform-origin:0 0">96 KB</div>
<svg style="left:21px;top:212px" width="16" height="16" viewBox="0 0 16 16"><use href="#file16"/></svg>
<div class="t" style="left:39.01px;top:213px;letter-spacing:0;transform:scaleX(0.9880);transform-origin:0 0">intel32.efi</div>
<div class="t" style="left:279.03px;top:213px;color:#6d6d6d;letter-spacing:0;transform:scaleX(0.9726);transform-origin:0 0">10/23/2020 9:43 AM</div>
<div class="t" style="left:399.13px;top:213px;color:#6d6d6d;letter-spacing:0;transform:scaleX(0.8725);transform-origin:0 0">EFI File</div>
<div class="t" style="left:551.26px;top:213px;color:#6d6d6d;letter-spacing:0;transform:scaleX(0.8421);transform-origin:0 0">220 KB</div>
<svg style="left:21px;top:233px" width="16" height="16" viewBox="0 0 16 16"><use href="#file16"/></svg>
<div class="t" style="left:39.01px;top:234px;letter-spacing:0;transform:scaleX(0.9880);transform-origin:0 0">intel64.efi</div>
<div class="t" style="left:279.03px;top:234px;color:#6d6d6d;letter-spacing:0;transform:scaleX(0.9726);transform-origin:0 0">10/23/2020 9:43 AM</div>
<div class="t" style="left:399.13px;top:234px;color:#6d6d6d;letter-spacing:0;transform:scaleX(0.8725);transform-origin:0 0">EFI File</div>
<div class="t" style="left:549.00px;top:234px;color:#6d6d6d;letter-spacing:0;transform:scaleX(0.9000);transform-origin:0 0">263 KB</div>
<svg style="left:21px;top:254px" width="16" height="16" viewBox="0 0 16 16"><use href="#file16"/></svg>
<div class="t" style="left:39.07px;top:255px;letter-spacing:0;transform:scaleX(0.9302);transform-origin:0 0">ipxe.pxe</div>
<div class="t" style="left:279.03px;top:255px;color:#6d6d6d;letter-spacing:0;transform:scaleX(0.9726);transform-origin:0 0">10/23/2020 9:43 AM</div>
<div class="t" style="left:399.03px;top:255px;color:#6d6d6d;letter-spacing:0;transform:scaleX(0.9700);transform-origin:0 0">PXE File</div>
<div class="t" style="left:549.00px;top:255px;color:#6d6d6d;letter-spacing:0;transform:scaleX(0.9000);transform-origin:0 0">349 KB</div>
<svg style="left:21px;top:275px" width="16" height="16" viewBox="0 0 16 16"><use href="#file16"/></svg>
<div class="t" style="left:39.05px;top:276px;letter-spacing:0;transform:scaleX(0.9520);transform-origin:0 0">ipxe32.efi</div>
<div class="t" style="left:279.03px;top:276px;color:#6d6d6d;letter-spacing:0;transform:scaleX(0.9726);transform-origin:0 0">10/23/2020 9:43 AM</div>
<div class="t" style="left:399.13px;top:276px;color:#6d6d6d;letter-spacing:0;transform:scaleX(0.8725);transform-origin:0 0">EFI File</div>
<div class="t" style="left:549.00px;top:276px;color:#6d6d6d;letter-spacing:0;transform:scaleX(0.9000);transform-origin:0 0">953 KB</div>
<svg style="left:21px;top:296px" width="16" height="16" viewBox="0 0 16 16"><use href="#file16"/></svg>
<div class="t" style="left:39.05px;top:297px;letter-spacing:0;transform:scaleX(0.9520);transform-origin:0 0">ipxe64.efi</div>
<div class="t" style="left:279.03px;top:297px;color:#6d6d6d;letter-spacing:0;transform:scaleX(0.9726);transform-origin:0 0">10/23/2020 9:43 AM</div>
<div class="t" style="left:399.13px;top:297px;color:#6d6d6d;letter-spacing:0;transform:scaleX(0.8725);transform-origin:0 0">EFI File</div>
<div class="t" style="left:540.00px;top:297px;color:#6d6d6d;letter-spacing:0;transform:scaleX(0.9000);transform-origin:0 0">1,040 KB</div>
<svg style="left:21px;top:317px" width="16" height="16" viewBox="0 0 16 16"><use href="#file16"/></svg>
<div class="t" style="left:39.02px;top:318px;letter-spacing:0;transform:scaleX(0.9800);transform-origin:0 0">MAP</div>
<div class="t" style="left:280.00px;top:318px;color:#6d6d6d;letter-spacing:0;transform:scaleX(0.9650);transform-origin:0 0">8/21/2020 4:53 AM</div>
<div class="t" style="left:399.08px;top:318px;color:#6d6d6d;letter-spacing:0;transform:scaleX(0.9167);transform-origin:0 0">File</div>
<div class="t" style="left:562.26px;top:318px;color:#6d6d6d;letter-spacing:0;transform:scaleX(0.8400);transform-origin:0 0">1 KB</div>
<svg style="left:21px;top:338px" width="16" height="16" viewBox="0 0 16 16"><use href="#file16"/></svg>
<div class="t" style="left:39.00px;top:339px;letter-spacing:0;transform:scaleX(0.9963);transform-origin:0 0">menu.ipxe</div>
<div class="t" style="left:279.04px;top:339px;color:#6d6d6d;letter-spacing:0;transform:scaleX(0.9619);transform-origin:0 0">2/23/2023 11:28 PM</div>
<div class="t" style="left:399.03px;top:339px;color:#6d6d6d;letter-spacing:0;transform:scaleX(0.9700);transform-origin:0 0">IPXE File</div>
<div class="t" style="left:563.10px;top:339px;color:#6d6d6d;letter-spacing:0;transform:scaleX(0.8077);transform-origin:0 0">8 KB</div>
<svg style="left:21px;top:359px" width="16" height="16" viewBox="0 0 16 16"><use href="#txt16"/></svg>
<div class="t" style="left:38.98px;top:360px;letter-spacing:0;transform:scaleX(1.0234);transform-origin:0 0">networkpath</div>
<div class="t" style="left:280.00px;top:360px;color:#6d6d6d;letter-spacing:0;transform:scaleX(0.9763);transform-origin:0 0">8/3/2020 5:31 AM</div>
<div class="t" style="left:400.00px;top:360px;color:#6d6d6d;letter-spacing:0;transform:scaleX(0.9887);transform-origin:0 0">Text Document</div>
<div class="t" style="left:562.26px;top:360px;color:#6d6d6d;letter-spacing:0;transform:scaleX(0.8400);transform-origin:0 0">1 KB</div>
<svg style="left:21px;top:380px" width="16" height="16" viewBox="0 0 16 16"><use href="#file16"/></svg>
<div class="t" style="left:39.06px;top:381px;letter-spacing:0;transform:scaleX(0.9367);transform-origin:0 0">NTBOOT</div>
<div class="t" style="left:280.00px;top:381px;color:#6d6d6d;letter-spacing:0;transform:scaleX(0.9650);transform-origin:0 0">8/21/2020 4:53 AM</div>
<div class="t" style="left:399.08px;top:381px;color:#6d6d6d;letter-spacing:0;transform:scaleX(0.9167);transform-origin:0 0">File</div>
<div class="t" style="left:562.26px;top:381px;color:#6d6d6d;letter-spacing:0;transform:scaleX(0.8400);transform-origin:0 0">1 KB</div>
<svg style="left:21px;top:401px" width="16" height="16" viewBox="0 0 16 16"><use href="#file16"/></svg>
<div class="t" style="left:40.00px;top:402px;letter-spacing:0;transform:scaleX(0.9643);transform-origin:0 0">snponly32.efi</div>
<div class="t" style="left:279.03px;top:402px;color:#6d6d6d;letter-spacing:0;transform:scaleX(0.9726);transform-origin:0 0">10/23/2020 9:43 AM</div>
<div class="t" style="left:399.13px;top:402px;color:#6d6d6d;letter-spacing:0;transform:scaleX(0.8725);transform-origin:0 0">EFI File</div>
<div class="t" style="left:551.26px;top:402px;color:#6d6d6d;letter-spacing:0;transform:scaleX(0.8421);transform-origin:0 0">220 KB</div>
<svg style="left:21px;top:422px" width="16" height="16" viewBox="0 0 16 16"><use href="#file16"/></svg>
<div class="t" style="left:40.00px;top:423px;letter-spacing:0;transform:scaleX(0.9643);transform-origin:0 0">snponly64.efi</div>
<div class="t" style="left:279.03px;top:423px;color:#6d6d6d;letter-spacing:0;transform:scaleX(0.9726);transform-origin:0 0">10/23/2020 9:46 AM</div>
<div class="t" style="left:399.13px;top:423px;color:#6d6d6d;letter-spacing:0;transform:scaleX(0.8725);transform-origin:0 0">EFI File</div>
<div class="t" style="left:551.26px;top:423px;color:#6d6d6d;letter-spacing:0;transform:scaleX(0.8421);transform-origin:0 0">262 KB</div>
<svg style="left:21px;top:443px" width="16" height="16" viewBox="0 0 16 16"><use href="#file16"/></svg>
<div class="t" style="left:39.05px;top:444px;letter-spacing:0;transform:scaleX(0.9500);transform-origin:0 0">undionly.kpxe</div>
<div class="t" style="left:279.03px;top:444px;color:#6d6d6d;letter-spacing:0;transform:scaleX(0.9700);transform-origin:0 0">10/23/2020 9:39 AM</div>
<div class="t" style="left:399.03px;top:444px;color:#6d6d6d;letter-spacing:0;transform:scaleX(0.9700);transform-origin:0 0">KPXE File</div>
<div class="t" style="left:555.30px;top:444px;color:#6d6d6d;letter-spacing:0;transform:scaleX(0.9000);transform-origin:0 0">67 KB</div>
</div>
<div class="a" style="left:299px;top:528px;width:111px;height:27px;background:transparent;border:5px solid #ed1c24"></div>
<div class="a" style="left:898px;top:164px;width:15px;height:479px;background:#f0f0f0;"></div>
<div class="a" style="left:898px;top:181px;width:15px;height:394px;background:#cdcdcd;"></div>
<svg style="left:901px;top:169px" width="9" height="7" viewBox="0 0 9 7"><path d="M1.2 5.6L4.5 2.1L7.8 5.6" stroke="#505050" stroke-width="2" fill="none"/></svg>
<svg style="left:901px;top:631px" width="9" height="7" viewBox="0 0 9 7"><path d="M1.2 1.4L4.5 4.9L7.8 1.4" stroke="#505050" stroke-width="2" fill="none"/></svg>
<div class="t" style="left:143.01px;top:647px;color:#1e395b;letter-spacing:0;transform:scaleX(0.9864);transform-origin:0 0">24 items</div>
<div class="a" style="left:198px;top:646px;width:1px;height:17px;background:#f0f0f0;"></div>
<div class="a" style="left:343px;top:646px;width:1px;height:17px;background:#f0f0f0;"></div>
<div class="t" style="left:208.72px;top:647px;color:#1e395b;letter-spacing:0;transform:scaleX(0.9785);transform-origin:0 0">1 item selected</div>
<div class="t" style="left:293.49px;top:647px;color:#1e395b;letter-spacing:0;transform:scaleX(0.9146);transform-origin:0 0">7.49 KB</div>
<div class="a" style="left:866px;top:643px;width:22px;height:23px;background:#cce8ff;border:1px solid #2a9ae0"></div>
<svg style="left:870px;top:648px" width="17" height="13" viewBox="0 0 17 13"><rect x="0.5" y="0.5" width="4" height="12" fill="#fff" stroke="#8a8a8a"/><path d="M0.5 4.5H4.5M0.5 8.5H4.5" stroke="#8a8a8a"/><circle cx="2.5" cy="2.5" r="0.8" fill="#4a8a5a"/><circle cx="2.5" cy="6.5" r="0.8" fill="#4a8ae8"/><circle cx="2.5" cy="10.5" r="0.8" fill="#d83030"/><path d="M6 2.5H10M12 2.5H16M6 6.5H10M12 6.5H16M6 10.5H10M12 10.5H16" stroke="#6a6a6a"/></svg>
<svg style="left:892px;top:648px" width="14" height="11" viewBox="0 0 14 11"><defs><linearGradient id="phg" x1="0" y1="0" x2="0" y2="1"><stop offset="0" stop-color="#4a90f0"/><stop offset="0.4" stop-color="#d8ecf8"/><stop offset="1" stop-color="#2a60a0"/></linearGradient></defs><rect x="0.5" y="0.5" width="13" height="10" fill="#fff" stroke="#8a8a8a"/><rect x="2" y="2" width="10" height="7" fill="url(#phg)"/><path d="M2 5Q5 4.5 8 7.5L2 8Z" fill="#3a6a40"/></svg>
<div class="a" style="left:558px;top:242px;width:276px;height:301px;background:#f2f2f2;border:1px solid #a0a0a0"></div>
<div class="t" style="left:593.80px;top:249px;font-weight:bold;letter-spacing:0;transform:scaleX(0.9845);transform-origin:0 0">Open with</div>
<div class="t" style="left:592.81px;top:271px;letter-spacing:0;transform:scaleX(0.9908);transform-origin:0 0">Mount as ImDisk Virtual Disk</div>
<div class="t" style="left:592.76px;top:293px;letter-spacing:0;transform:scaleX(1.0385);transform-origin:0 0">7-Zip</div>
<div class="t" style="left:592.81px;top:315px;letter-spacing:0;transform:scaleX(0.9915);transform-origin:0 0">Scan with Windows Defender...</div>
<div class="t" style="left:592.83px;top:337px;letter-spacing:0;transform:scaleX(0.9664);transform-origin:0 0">Restore previous versions</div>
<div class="t" style="left:592.82px;top:366px;letter-spacing:0;transform:scaleX(0.9800);transform-origin:0 0">Send to</div>
<div class="t" style="left:592.80px;top:395px;letter-spacing:0;transform:scaleX(1.0000);transform-origin:0 0">Cut</div>
<div class="t" style="left:592.78px;top:417px;letter-spacing:0;transform:scaleX(1.0185);transform-origin:0 0">Copy</div>
<div class="t" style="left:592.81px;top:446px;letter-spacing:0;transform:scaleX(0.9901);transform-origin:0 0">Create shortcut</div>
<div class="t" style="left:592.81px;top:468px;letter-spacing:0;transform:scaleX(0.9939);transform-origin:0 0">Delete</div>
<div class="t" style="left:592.84px;top:490px;letter-spacing:0;transform:scaleX(0.9636);transform-origin:0 0">Rename</div>
<div class="t" style="left:592.81px;top:519px;letter-spacing:0;transform:scaleX(0.9887);transform-origin:0 0">Properties</div>
<div class="a" style="left:569px;top:359px;width:254px;height:1px;background:#a0a0a0;"></div>
<div class="a" style="left:569px;top:388px;width:254px;height:1px;background:#a0a0a0;"></div>
<div class="a" style="left:569px;top:439px;width:254px;height:1px;background:#a0a0a0;"></div>
<div class="a" style="left:569px;top:512px;width:254px;height:1px;background:#a0a0a0;"></div>
<svg style="left:815px;top:294px" width="9" height="14" viewBox="0 0 9 14"><path d="M0.8 0.6L7.6 6.8L0.8 13" stroke="#3a3a3a" stroke-width="1" fill="none"/></svg>
<svg style="left:815px;top:367px" width="9" height="14" viewBox="0 0 9 14"><path d="M0.8 0.6L7.6 6.8L0.8 13" stroke="#3a3a3a" stroke-width="1" fill="none"/></svg>
<svg style="left:569px;top:315px" width="16" height="16" viewBox="0 0 16 16"><rect width="16" height="16" fill="#0b76d6"/><path d="M1.3 2.4Q4.6 2.2 7.5 0.9V6.9H1.3ZM8.5 0.9Q11.4 2.2 14.7 2.4V6.9H8.5ZM1.3 7.9H7.5V14.9Q2.8 12.2 1.3 7.9ZM8.5 7.9H14.7Q13.2 12.2 8.5 14.9Z" fill="#fff"/></svg>
<div class="a" style="left:556px;top:240px;width:281px;height:32px;background:transparent;border:5px solid #ed1c24"></div>
<div class="a" style="left:0px;top:728px;width:1024px;height:40px;background:#101010;"></div>
<svg style="left:16px;top:740px" width="16" height="17" viewBox="0 0 16 17"><path d="M0 1L6 0.5V7H0ZM7 0.4L16 -0.3V7H7ZM0 8H6V14.8L0 14ZM7 8H16V16.2L7 15Z" fill="#fff"/></svg>
<svg style="left:64px;top:740px" width="17" height="17" viewBox="0 0 17 17"><circle cx="10.5" cy="5.5" r="5.1" stroke="#fff" stroke-width="1.4" fill="none"/><path d="M6.9 9.2L0.8 15.3" stroke="#fff" stroke-width="1.5"/></svg>
<div class="a" style="left:99px;top:728px;width:48px;height:40px;background:#333;"></div>
<div class="a" style="left:99px;top:766px;width:48px;height:2px;background:#76d0d8;"></div>
<svg style="left:111px;top:738px" width="24" height="20" viewBox="0 0 24 20"><rect x="1.2" y="2" width="21.5" height="16.2" rx="1.2" fill="#fde58a"/><path d="M1.2 4.2V2.6Q1.2 1 2.8 1H9.5Q11 1 11 2.5V4.2Z" fill="#f6c842"/><path d="M3.2 2.6H7.5" stroke="#fff6c8" stroke-width="1"/><circle cx="2.7" cy="2.6" r="0.8" fill="#35b8e8"/><path d="M5 19V12Q5 11 6 11H18Q19 11 19 12V19H15V14H9V19Z" fill="#2cb0f0"/></svg>
<svg style="left:160px;top:735px" width="24" height="24" viewBox="0 0 24 24"><defs><radialGradient id="ieg" cx="0.45" cy="0.4" r="0.6"><stop offset="0" stop-color="#9ef0ff"/><stop offset="1" stop-color="#2aa8e8"/></radialGradient></defs><ellipse cx="12" cy="12" rx="13" ry="4.6" transform="rotate(-42 12 12)" fill="none" stroke="#d8a010" stroke-width="1.8"/><ellipse cx="13" cy="13" rx="10.2" ry="10.3" fill="url(#ieg)"/><ellipse cx="13.6" cy="9.6" rx="5" ry="2.7" fill="#0d1a24"/><path d="M8 14.2H24V17.6H20Q16.5 20 12 18.6Q8.8 17.2 8 14.2Z" fill="#0d1a24"/><path d="M1.5 22.5Q-1 19 4 12.5Q10 5 19 2Q23.5 0.8 23 3.6" stroke="#f2c41a" stroke-width="2" fill="none"/></svg>
<svg style="left:208px;top:735px" width="26" height="26" viewBox="0 0 26 26"><path d="M1 11H10.5L11.5 17.5H2Z" fill="#c9cde2" stroke="#8a8a9a" stroke-width="0.6"/><path d="M4 16L8 12" stroke="#fff" stroke-width="0.8"/><path d="M1 18H24.5V21.5H1Z" fill="#e4e4e4"/><path d="M2.5 21.5H4V25H2.5ZM22 21.5H23.5V25H22Z" fill="#eee"/><path d="M13.5 15.5H20.5V22H14Z" fill="#2e58b0"/><path d="M17 18H22V25H17Z" fill="#7a7a7a"/><path d="M12 23H17V25H12Z" fill="#f0f0f0"/><circle cx="16.5" cy="6" r="5" fill="#3f5fae"/><circle cx="20.5" cy="7.5" r="4.2" fill="#3f5fae"/><ellipse cx="16.5" cy="9.8" rx="5.4" ry="4.9" fill="#f7c96a"/><circle cx="14.3" cy="9.5" r="1" fill="#8aa0d8"/><circle cx="18.4" cy="9.5" r="1" fill="#8aa0d8"/><path d="M15 13Q18 14 20.5 11.5" stroke="#fff" stroke-width="1" fill="none"/><circle cx="12.5" cy="16.5" r="2" fill="#f7c96a"/><circle cx="7.2" cy="7.7" r="0.9" fill="#ccc"/></svg>
<div class="a" style="left:201px;top:766px;width:40px;height:2px;background:#76d0d8;"></div>
<svg style="left:889px;top:744px" width="13" height="8" viewBox="0 0 13 8"><path d="M0.8 7.2L6.5 1.2L12.2 7.2" stroke="#fff" stroke-width="1.2" fill="none"/></svg>
<svg style="left:911px;top:741px" width="17" height="14" viewBox="0 0 17 14"><path d="M0.6 4.5H3.5L7.5 0.8V13.2L3.5 9.5H0.6Z" stroke="#fff" stroke-width="1.1" fill="none"/><path d="M10 4.5Q11.5 7 10 9.5M12.3 2.8Q14.8 7 12.3 11.2M14.6 1Q18 7 14.6 13" stroke="#fff" stroke-width="1.1" fill="none"/></svg>
<svg style="left:935px;top:742px" width="17" height="13" viewBox="0 0 17 13"><rect x="5.5" y="0.5" width="11" height="8" stroke="#fff" fill="none"/><path d="M11 9V11.5M7.5 12.5H14.5" stroke="#fff"/><rect x="0.5" y="0.5" width="4" height="4" stroke="#fff" fill="#101010"/><path d="M2.5 5V9" stroke="#fff"/></svg>
<div class="t" style="left:963.04px;top:731px;color:#fff;letter-spacing:0;transform:scaleX(0.9551);transform-origin:0 0">11:44 PM</div>
<div class="t" style="left:960.32px;top:749px;color:#fff;letter-spacing:0;transform:scaleX(0.9846);transform-origin:0 0">2/23/2023</div>
<div class="a" style="left:1019px;top:728px;width:1px;height:40px;background:#555;"></div>
</body></html>
